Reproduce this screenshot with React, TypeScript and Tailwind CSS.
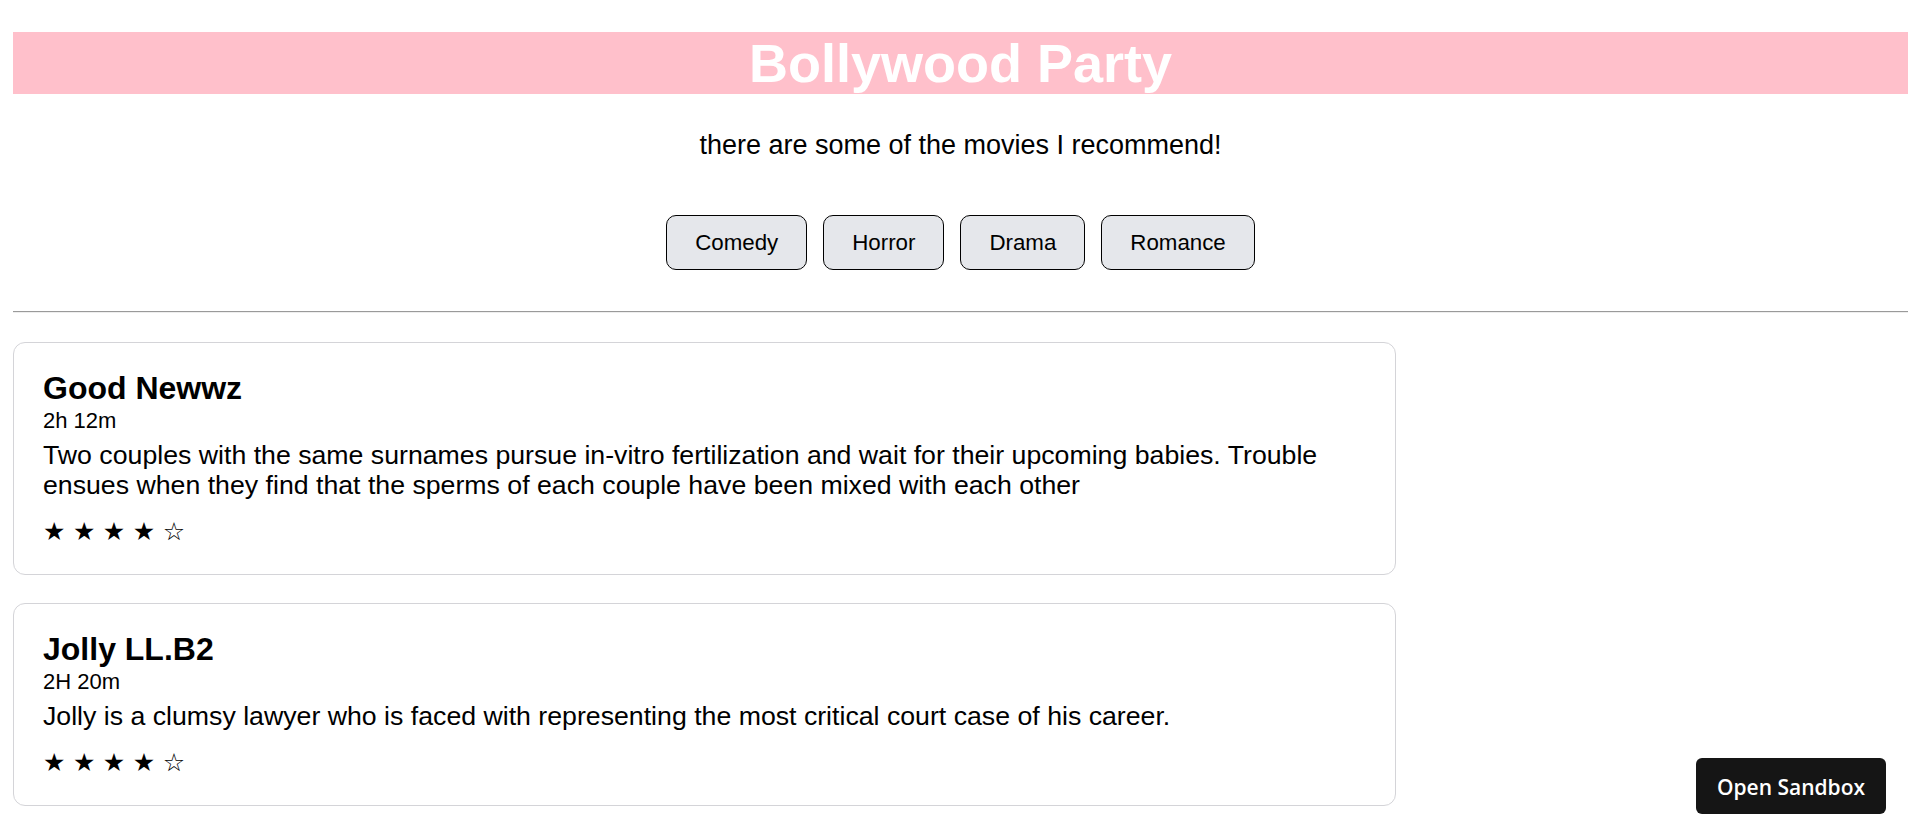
import React from "react";

type Movie = { name: string; duration: string; desc: string; rating: number };

const movies: Movie[] = [
  {
    name: "Good Newwz",
    duration: "2h 12m",
    desc: "Two couples with the same surnames pursue in-vitro fertilization and wait for their upcoming babies. Trouble ensues when they find that the sperms of each couple have been mixed with each other",
    rating: 4,
  },
  {
    name: "Jolly LL.B2",
    duration: "2H 20m",
    desc: "Jolly is a clumsy lawyer who is faced with representing the most critical court case of his career.",
    rating: 4,
  },
];

const genres = ["Comedy", "Horror", "Drama", "Romance"];

function Stars({ n }: { n: number }) {
  return (
    <div className="mt-[19px] flex gap-[7.5px] text-[25px] leading-[26px] text-black [font-family:'DejaVu_Sans',sans-serif]">
      {[0, 1, 2, 3, 4].map((i) => (
        <span key={i}>{i < n ? "★" : "☆"}</span>
      ))}
    </div>
  );
}

export default function App() {
  return (
    <div className="min-h-[839px] bg-white pl-[13px] pr-[12px] pt-[32px] text-black [font-family:'Liberation_Sans',Arial,sans-serif]">
      <h1 className="h-[62px] bg-[#ffc0cb] text-center text-[54px] font-bold leading-[62px] text-white">
        Bollywood Party
      </h1>
      <p className="mt-[36px] text-center text-[27px] leading-[31px]">
        there are some of the movies I recommend!
      </p>
      <div className="mt-[54px] flex justify-center gap-[16px]">
        {genres.map((g) => (
          <button
            key={g}
            className="h-[55px] rounded-[10px] border border-black bg-[#e5e7eb] px-[28px] text-[22.3px] leading-[26px] text-black"
          >
            {g}
          </button>
        ))}
      </div>
      <div className="mt-[41px] h-[2px] border-t border-b border-t-[#9a9a9a] border-b-[#eeeeee]" />
      <div className="mt-[29px] flex flex-col gap-[28px]">
        {movies.map((m) => (
          <div
            key={m.name}
            className="w-[1383px] rounded-[12px] border border-[#d4d4d8] px-[29px] pb-[29px] pt-[27px]"
          >
            <h2 className="text-[32px] font-bold leading-[37px]">{m.name}</h2>
            <div className="mt-[1px] text-[22px] leading-[25px]">{m.duration}</div>
            <p className="mt-[7px] text-[26.7px] leading-[30px]">{m.desc}</p>
            <Stars n={m.rating} />
          </div>
        ))}
      </div>
      <button className="fixed bottom-[25px] right-[34px] flex h-[56px] w-[190px] items-center justify-center rounded-[6px] bg-[#151515] pt-[3px] text-[21px] font-semibold text-white [font-family:'Open_Sans',sans-serif]">
        Open Sandbox
      </button>
    </div>
  );
}
